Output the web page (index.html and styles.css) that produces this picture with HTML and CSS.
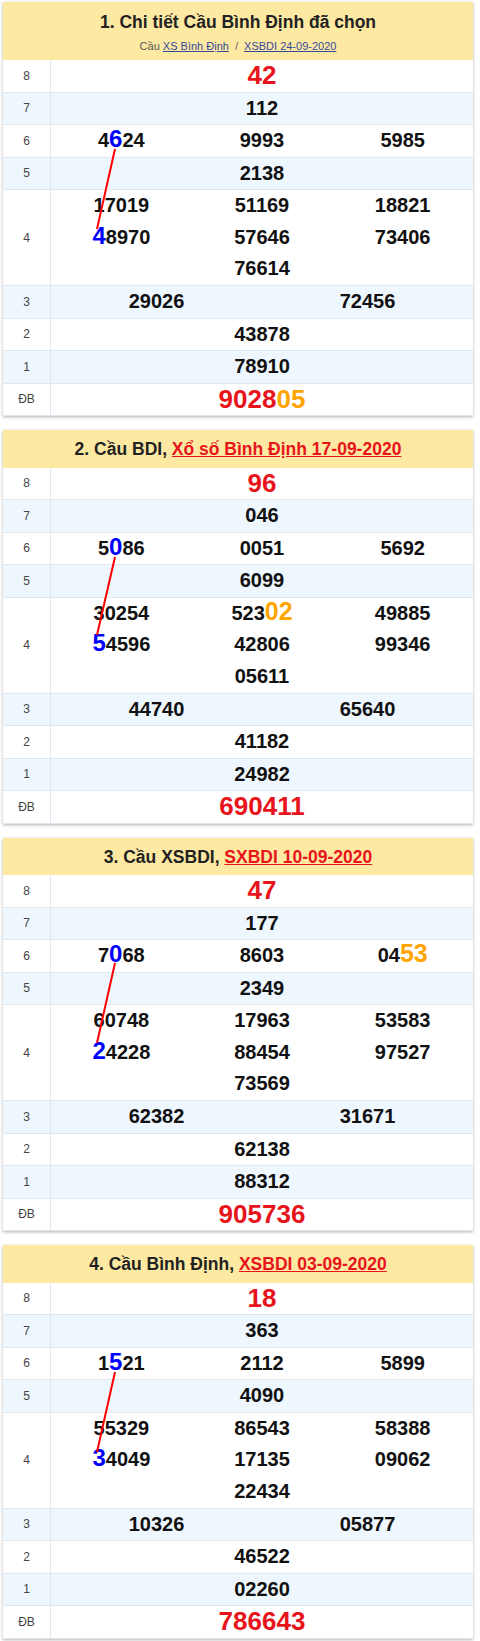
FILE: index.html
```html
<!DOCTYPE html>
<html lang="vi">
<head>
<meta charset="utf-8">
<title>Cầu Bình Định</title>
<link rel="stylesheet" href="styles.css">
</head>
<body>

<div class="card">
  <div class="head head-first">
    <h2>1. Chi tiết Cầu Bình Định đã chọn</h2>
    <div class="crumb">Cầu <a href="#">XS Bình Định</a> <span class="sep">/</span> <a href="#">XSBDI 24-09-2020</a></div>
  </div>
  <div class="body">
    <div class="row"><div class="lbl">8</div><div class="nums c1"><span class="n big">42</span></div></div>
    <div class="row"><div class="lbl">7</div><div class="nums c1"><span class="n">112</span></div></div>
    <div class="row"><div class="lbl">6</div><div class="nums c3"><span class="n">4<span class="hl">6</span>24</span><span class="n">9993</span><span class="n">5985</span></div></div>
    <div class="row"><div class="lbl">5</div><div class="nums c1"><span class="n">2138</span></div></div>
    <div class="row row4"><div class="lbl">4</div><div class="nums c3"><span class="n">17019</span><span class="n">51169</span><span class="n">18821</span><span class="n"><span class="hl">4</span>8970</span><span class="n">57646</span><span class="n">73406</span><span class="n">76614</span></div></div>
    <div class="row"><div class="lbl">3</div><div class="nums c2"><span class="n">29026</span><span class="n">72456</span></div></div>
    <div class="row"><div class="lbl">2</div><div class="nums c1"><span class="n">43878</span></div></div>
    <div class="row"><div class="lbl">1</div><div class="nums c1"><span class="n">78910</span></div></div>
    <div class="row"><div class="lbl">ĐB</div><div class="nums c1"><span class="n big">9028<span class="or">05</span></span></div></div>
    <svg class="bridge" aria-hidden="true"><line x1="112" y1="89" x2="94" y2="169"/></svg>
  </div>
</div>

<div class="card">
  <div class="head">
    <h2>2. Cầu BDI, <a href="#">Xổ số Bình Định 17-09-2020</a></h2>
  </div>
  <div class="body">
    <div class="row"><div class="lbl">8</div><div class="nums c1"><span class="n big">96</span></div></div>
    <div class="row"><div class="lbl">7</div><div class="nums c1"><span class="n">046</span></div></div>
    <div class="row"><div class="lbl">6</div><div class="nums c3"><span class="n">5<span class="hl">0</span>86</span><span class="n">0051</span><span class="n">5692</span></div></div>
    <div class="row"><div class="lbl">5</div><div class="nums c1"><span class="n">6099</span></div></div>
    <div class="row row4"><div class="lbl">4</div><div class="nums c3"><span class="n">30254</span><span class="n">523<span class="or">02</span></span><span class="n">49885</span><span class="n"><span class="hl">5</span>4596</span><span class="n">42806</span><span class="n">99346</span><span class="n">05611</span></div></div>
    <div class="row"><div class="lbl">3</div><div class="nums c2"><span class="n">44740</span><span class="n">65640</span></div></div>
    <div class="row"><div class="lbl">2</div><div class="nums c1"><span class="n">41182</span></div></div>
    <div class="row"><div class="lbl">1</div><div class="nums c1"><span class="n">24982</span></div></div>
    <div class="row"><div class="lbl">ĐB</div><div class="nums c1"><span class="n big">690411</span></div></div>
    <svg class="bridge" aria-hidden="true"><line x1="112" y1="89" x2="94" y2="167"/></svg>
  </div>
</div>

<div class="card">
  <div class="head">
    <h2>3. Cầu XSBDI, <a href="#">SXBDI 10-09-2020</a></h2>
  </div>
  <div class="body">
    <div class="row"><div class="lbl">8</div><div class="nums c1"><span class="n big">47</span></div></div>
    <div class="row"><div class="lbl">7</div><div class="nums c1"><span class="n">177</span></div></div>
    <div class="row"><div class="lbl">6</div><div class="nums c3"><span class="n">7<span class="hl">0</span>68</span><span class="n">8603</span><span class="n">04<span class="or">53</span></span></div></div>
    <div class="row"><div class="lbl">5</div><div class="nums c1"><span class="n">2349</span></div></div>
    <div class="row row4"><div class="lbl">4</div><div class="nums c3"><span class="n">60748</span><span class="n">17963</span><span class="n">53583</span><span class="n"><span class="hl">2</span>4228</span><span class="n">88454</span><span class="n">97527</span><span class="n">73569</span></div></div>
    <div class="row"><div class="lbl">3</div><div class="nums c2"><span class="n">62382</span><span class="n">31671</span></div></div>
    <div class="row"><div class="lbl">2</div><div class="nums c1"><span class="n">62138</span></div></div>
    <div class="row"><div class="lbl">1</div><div class="nums c1"><span class="n">88312</span></div></div>
    <div class="row"><div class="lbl">ĐB</div><div class="nums c1"><span class="n big">905736</span></div></div>
    <svg class="bridge" aria-hidden="true"><line x1="112" y1="88" x2="94" y2="168"/></svg>
  </div>
</div>

<div class="card">
  <div class="head">
    <h2>4. Cầu Bình Định, <a href="#">XSBDI 03-09-2020</a></h2>
  </div>
  <div class="body">
    <div class="row"><div class="lbl">8</div><div class="nums c1"><span class="n big">18</span></div></div>
    <div class="row"><div class="lbl">7</div><div class="nums c1"><span class="n">363</span></div></div>
    <div class="row"><div class="lbl">6</div><div class="nums c3"><span class="n">1<span class="hl">5</span>21</span><span class="n">2112</span><span class="n">5899</span></div></div>
    <div class="row"><div class="lbl">5</div><div class="nums c1"><span class="n">4090</span></div></div>
    <div class="row row4"><div class="lbl">4</div><div class="nums c3"><span class="n">55329</span><span class="n">86543</span><span class="n">58388</span><span class="n"><span class="hl">3</span>4049</span><span class="n">17135</span><span class="n">09062</span><span class="n">22434</span></div></div>
    <div class="row"><div class="lbl">3</div><div class="nums c2"><span class="n">10326</span><span class="n">05877</span></div></div>
    <div class="row"><div class="lbl">2</div><div class="nums c1"><span class="n">46522</span></div></div>
    <div class="row"><div class="lbl">1</div><div class="nums c1"><span class="n">02260</span></div></div>
    <div class="row"><div class="lbl">ĐB</div><div class="nums c1"><span class="n big">786643</span></div></div>
    <svg class="bridge" aria-hidden="true"><line x1="112" y1="89" x2="94" y2="169"/></svg>
  </div>
</div>

</body>
</html>
```

FILE: styles.css
```css
html {
  background: #ffffff;
}

body {
  margin: 0;
  padding: 2px 7px 4px 3px;
  font-family: "Liberation Sans", Arial, sans-serif;
  color: #111;
}

.card {
  background: #ffffff;
  box-shadow: 0 1px 3px rgba(0, 0, 0, 0.3);
  margin-bottom: 14px;
}

.card:last-child {
  margin-bottom: 0;
}

.head {
  background: #fee9a2;
  text-align: center;
  padding: 8px 0 7.5px;
}

.head-first {
  padding: 9px 0 6px;
}

.head h2 {
  margin: 0;
  font-size: 17.5px;
  line-height: 22px;
  font-weight: bold;
  color: #222;
}

.head h2 a {
  color: #e8141c;
  text-decoration: underline;
}

.crumb {
  margin-top: 5px;
  font-size: 11px;
  line-height: 16px;
  color: #555;
}

.crumb a {
  color: #34499c;
  text-decoration: underline;
}

.crumb .sep {
  margin: 0 3px;
  color: #666;
}

.body {
  position: relative;
}

.row {
  display: grid;
  grid-template-columns: 48px 1fr;
  border-bottom: 1px solid #e1e7ee;
}

.row:nth-child(even) {
  background: #eef6fe;
}

.lbl {
  border-right: 1px solid #e1e7ee;
  display: flex;
  align-items: center;
  justify-content: center;
  font-size: 12px;
  color: #444;
}

.nums {
  display: flex;
  flex-wrap: wrap;
  justify-content: center;
}

.n {
  text-align: center;
  font-weight: bold;
  font-size: 20px;
  line-height: 31.5px;
  color: #111;
}

.c1 .n {
  width: 100%;
}

.c2 .n {
  width: 50%;
}

.c3 .n {
  width: 33.333%;
}

.row4 .n {
  line-height: 31.67px;
}

.n.big {
  font-size: 26px;
  color: #e8141c;
}

.hl {
  color: #0000ff;
  font-size: 24px;
  line-height: 0;
}

.or {
  color: #ffa500;
  font-size: 25px;
  line-height: 0;
}

.big .or {
  font-size: 26px;
}

.bridge {
  position: absolute;
  left: 0;
  top: 0;
  width: 100%;
  height: 100%;
  pointer-events: none;
  overflow: visible;
}

.bridge line {
  stroke: #ff0000;
  stroke-width: 2;
}
```
